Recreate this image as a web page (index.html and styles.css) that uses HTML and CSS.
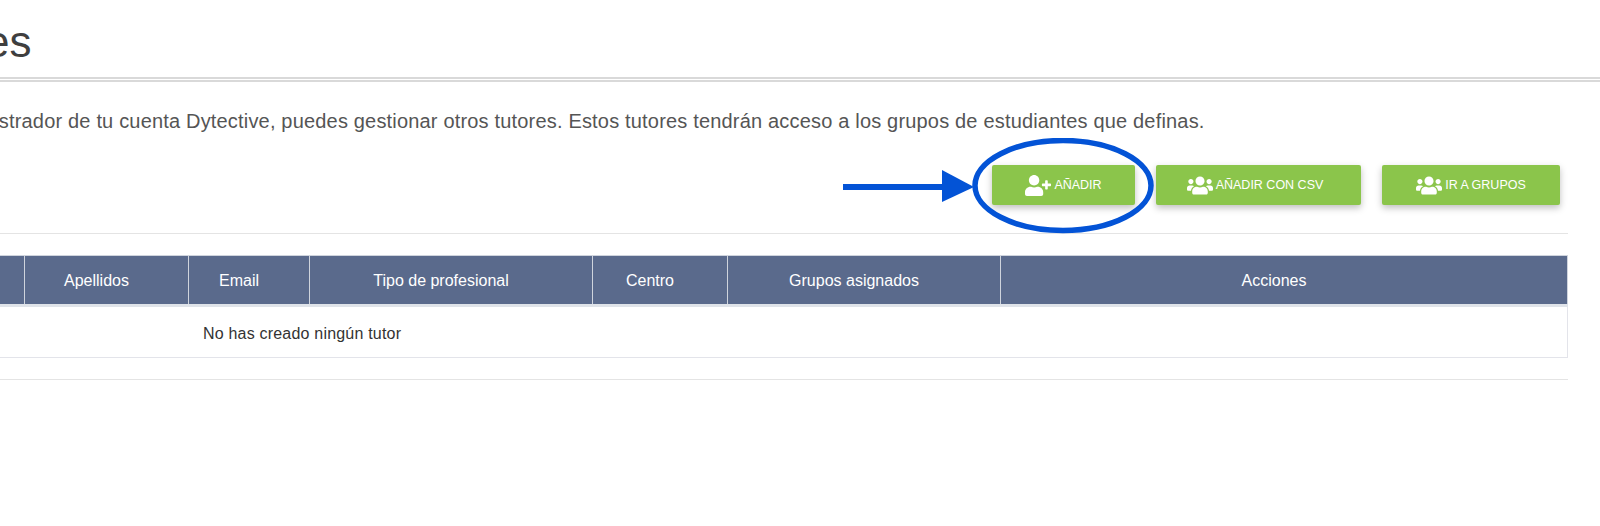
FILE: index.html
```html
<!DOCTYPE html>
<html>
<head>
    <meta charset="UTF-8">
    <title>Tutores</title>
    <link rel="stylesheet" href="styles.css">
</head>
<body>
    <div class="page">
        <div class="title-bar">
            <h1>Tutores</h1>
        </div>

        <div class="content">
            <p class="intro">Como administrador de tu cuenta Dytective, puedes gestionar otros tutores. Estos tutores tendrán acceso a los grupos de estudiantes que definas.</p>

            <div class="actions">
                <button class="btn btn-add">
                    <svg class="icon" viewBox="0 0 640 512"><path d="M624 208h-64v-64c0-8.8-7.2-16-16-16h-32c-8.8 0-16 7.2-16 16v64h-64c-8.8 0-16 7.2-16 16v32c0 8.8 7.2 16 16 16h64v64c0 8.8 7.2 16 16 16h32c8.8 0 16-7.2 16-16v-64h64c8.8 0 16-7.2 16-16v-32c0-8.8-7.2-16-16-16zm-400 48c70.7 0 128-57.3 128-128S294.7 0 224 0 96 57.3 96 128s57.3 128 128 128zm89.6 32h-16.7c-22.2 10.2-46.9 16-72.9 16s-50.6-5.8-72.9-16h-16.7C60.2 288 0 348.2 0 422.4V464c0 26.5 21.5 48 48 48h352c26.5 0 48-21.5 48-48v-41.6c0-74.2-60.2-134.4-134.4-134.4z"/></svg>
                    AÑADIR
                </button>
                <button class="btn btn-csv">
                    <svg class="icon" viewBox="0 0 640 512"><path d="M96 224c35.3 0 64-28.7 64-64s-28.7-64-64-64-64 28.7-64 64 28.7 64 64 64zm448 0c35.3 0 64-28.7 64-64s-28.7-64-64-64-64 28.7-64 64 28.7 64 64 64zm32 32h-64c-17.6 0-33.5 7.1-45.1 18.6 40.3 22.1 68.9 62 75.1 109.4h66c17.7 0 32-14.3 32-32v-32c0-35.3-28.7-64-64-64zm-256 0c61.9 0 112-50.1 112-112S381.9 32 320 32 208 82.1 208 144s50.1 112 112 112zm76.8 32h-8.3c-20.8 10-43.9 16-68.5 16s-47.6-6-68.5-16h-8.3C179.6 288 128 339.6 128 403.2V432c0 26.5 21.5 48 48 48h288c26.5 0 48-21.5 48-48v-28.8c0-63.6-51.6-115.2-115.2-115.2zm-223.7-13.4C161.5 263.1 145.6 256 128 256H64c-35.3 0-64 28.7-64 64v32c0 17.7 14.3 32 32 32h65.9c6.3-47.4 34.9-87.3 75.2-109.4z"/></svg>
                    AÑADIR CON CSV
                </button>
                <button class="btn btn-groups">
                    <svg class="icon" viewBox="0 0 640 512"><path d="M96 224c35.3 0 64-28.7 64-64s-28.7-64-64-64-64 28.7-64 64 28.7 64 64 64zm448 0c35.3 0 64-28.7 64-64s-28.7-64-64-64-64 28.7-64 64 28.7 64 64 64zm32 32h-64c-17.6 0-33.5 7.1-45.1 18.6 40.3 22.1 68.9 62 75.1 109.4h66c17.7 0 32-14.3 32-32v-32c0-35.3-28.7-64-64-64zm-256 0c61.9 0 112-50.1 112-112S381.9 32 320 32 208 82.1 208 144s50.1 112 112 112zm76.8 32h-8.3c-20.8 10-43.9 16-68.5 16s-47.6-6-68.5-16h-8.3C179.6 288 128 339.6 128 403.2V432c0 26.5 21.5 48 48 48h288c26.5 0 48-21.5 48-48v-28.8c0-63.6-51.6-115.2-115.2-115.2zm-223.7-13.4C161.5 263.1 145.6 256 128 256H64c-35.3 0-64 28.7-64 64v32c0 17.7 14.3 32 32 32h65.9c6.3-47.4 34.9-87.3 75.2-109.4z"/></svg>
                    IR A GRUPOS
                </button>
            </div>

            <hr class="divider">

            <table class="tutors">
                <colgroup>
                    <col class="col-name">
                    <col class="col-surname">
                    <col class="col-email">
                    <col class="col-type">
                    <col class="col-center">
                    <col class="col-groups">
                    <col class="col-actions">
                </colgroup>
                <thead>
                    <tr>
                        <th>Nombre</th>
                        <th>Apellidos</th>
                        <th>Email</th>
                        <th>Tipo de profesional</th>
                        <th>Centro</th>
                        <th>Grupos asignados</th>
                        <th>Acciones</th>
                    </tr>
                </thead>
                <tbody>
                    <tr>
                        <td class="empty" colspan="7">No has creado ningún tutor</td>
                    </tr>
                </tbody>
            </table>

            <hr class="divider divider-bottom">
        </div>
    </div>

    <!-- blue annotation over the first button -->
    <svg class="callout" viewBox="0 0 340 110">
        <rect x="3" y="46" width="100" height="6" fill="#0353d6"/>
        <polygon points="102,32 134,49 102,64" fill="#0353d6"/>
        <ellipse cx="223" cy="47.5" rx="88" ry="45" fill="none" stroke="#0353d6" stroke-width="5.5"/>
    </svg>
</body>
</html>
```

FILE: styles.css
```css
* {
    margin: 0;
    padding: 0;
    box-sizing: border-box;
    font-family: "Liberation Sans", Arial, sans-serif;
}

body {
    background: white;
    height: 526px;
    overflow: hidden;
    position: relative;
}

.page {
    width: 1768px;
    margin-left: -200px;
}

.title-bar {
    height: 82px;
    border-bottom: 5px double #d9d9d9;
    padding-top: 17px;
    width: 1800px;
}

.title-bar h1 {
    font-size: 44px;
    font-weight: normal;
    line-height: 50px;
    color: #3f3f3f;
    padding-left: 84px;
}

.intro {
    margin-top: 29px;
    margin-left: 79px;
    font-size: 20px;
    letter-spacing: 0.18px;
    line-height: 20px;
    color: #555;
    white-space: nowrap;
}

.actions {
    display: flex;
    justify-content: flex-end;
    margin-top: 34px;
    padding-right: 8px;
}

.btn {
    height: 40px;
    background: #8bc54b;
    color: white;
    border: none;
    border-radius: 2px;
    font-size: 12.5px;
    box-shadow: 0 3px 7px rgba(0, 0, 0, 0.25);
    display: flex;
    align-items: center;
    justify-content: center;
    gap: 3px;
}

.btn-add {
    width: 143px;
}

.btn-csv {
    width: 205px;
    margin-left: 21px;
    padding-right: 7px;
}

.btn-groups {
    width: 178px;
    margin-left: 21px;
}

.icon {
    width: 26px;
    height: 21px;
    fill: white;
}

.divider {
    border: none;
    border-top: 1px solid #e4e4e4;
    margin-top: 28px;
}

.divider-bottom {
    margin-top: 21px;
}

.tutors {
    width: 100%;
    margin-top: 21px;
    border-collapse: collapse;
    table-layout: fixed;
}

.col-name { width: 224px; }
.col-surname { width: 164px; }
.col-email { width: 121px; }
.col-type { width: 283px; }
.col-center { width: 135px; }
.col-groups { width: 273px; }

.tutors th {
    height: 50px;
    padding-top: 2px;
    padding-right: 20px;
    background: #5a6a8c;
    color: white;
    font-size: 16px;
    font-weight: normal;
    text-align: center;
    border: 1px solid #cfd4dd;
    border-bottom: 3px solid #dfe3e9;
}

.tutors td {
    height: 52px;
    padding-top: 3px;
    border: 1px solid #e3e4ea;
    font-size: 16px;
    letter-spacing: 0.2px;
    color: #333;
}

.empty {
    padding-left: 402px;
}

.callout {
    position: absolute;
    left: 840px;
    top: 138px;
    width: 340px;
    height: 110px;
}
```
